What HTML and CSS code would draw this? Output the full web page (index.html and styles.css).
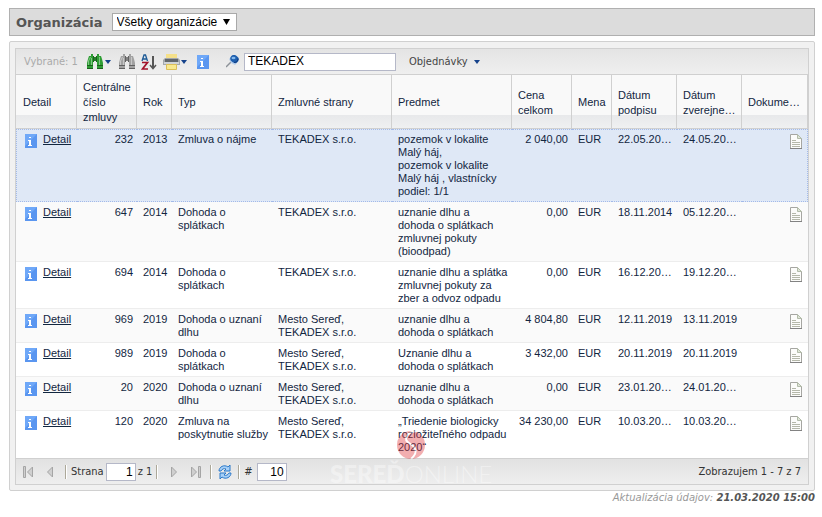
FILE: index.html
```
<!DOCTYPE html>
<html lang="sk">
<head>
    <meta charset="UTF-8">
    <meta name="viewport" content="width=device-width, initial-scale=1.0">
    <title>Organizácia</title>
    <link rel="stylesheet" href="styles.css">
</head>
<body>
    <svg class="defs" aria-hidden="true">
        <symbol id="binoculars" viewBox="0 0 18 16">
            <path d="M3 2h2V0h2v2h1v1h2V2h1V0h2v2h2l1 3 1 4v6h-6V8h-1V7H8v1H7v7H1V9l1-4z" fill="currentColor"/>
            <path d="M7.500 2v6M10.500 2v6M9 3v4M1 11.500h6M11 11.500h6M1 14.500h6M11 14.500h6" fill="none" stroke="#000" stroke-opacity=".4"/>
            <path d="M4.500 3L2.500 7v4M13.500 3v8M5.500 4v7" fill="none" stroke="#fff" stroke-opacity=".4"/>
        </symbol>
        <symbol id="info" viewBox="0 0 12 14">
            <path d="M0 0h12v14H0z" fill="#5a96f0"/>
            <path d="M0 0h12L0 12z" fill="#6fa8f8"/>
            <path d="M4 3h2v1H4zM3 6h3v5h1v1H3v-1h1V7H3z" fill="#fff"/>
        </symbol>
        <symbol id="doc" viewBox="0 0 14 17">
            <path d="M1.500 1.500h7l4 4v10h-11z" fill="#fcfcfa" stroke="#a6a6a2"/>
            <path d="M1 15.500h12" fill="none" stroke="#828282"/>
            <path d="M8.500 1.500v4h4z" fill="#dfe5d8" stroke="#b3bca9"/>
            <path d="M3 7.500h4M3 9.500h8M3 11.500h8M3 13.500h8" stroke="#b5b8aa"/>
        </symbol>
        <symbol id="caret" viewBox="0 0 6 4">
            <path d="M0 0h6L3 4z" fill="#15428b"/>
        </symbol>
    </svg>

    <header class="title-bar">
        <label for="organization">Organizácia</label>
        <select id="organization">
            <option>Všetky organizácie</option>
        </select>
    </header>

    <main class="panel">
        <div class="grid">
            <div class="toolbar">
                <span class="selected-count">Vybrané: 1</span>
                <button type="button" class="tool find" aria-label="Hľadať">
                    <svg width="18" height="16"><use href="#binoculars"/></svg>
                    <svg width="6" height="4"><use href="#caret"/></svg>
                </button>
                <button type="button" class="tool find-off" aria-label="Zrušiť hľadanie">
                    <svg width="18" height="16"><use href="#binoculars"/></svg>
                </button>
                <button type="button" class="tool sort" aria-label="Zoradiť">
                    <svg width="16" height="16" viewBox="0 0 16 16" fill="none">
                        <path d="M1 7l2-6h1.500l2 6M2 5h4" stroke="#1d5a96" stroke-width="1.300"/>
                        <path d="M1 8.500h5.500L1.500 15H7" stroke="#a3122b" stroke-width="1.700"/>
                        <path d="M12 2v12" stroke="#555" stroke-width="2"/>
                        <path d="M9 11l3 3.500 3-3.500" stroke="#555" stroke-width="1.500"/>
                    </svg>
                </button>
                <button type="button" class="tool print" aria-label="Tlačiť">
                    <svg width="17" height="16" viewBox="0 0 17 16">
                        <path d="M3 0h11v4H3z" fill="#f5e08a"/>
                        <path d="M2 4h13l2 2v5H0V6z" fill="#a4a8ac"/>
                        <path d="M2 5h13v3H2z" fill="#62676c"/>
                        <path d="M1 8h15v2H1z" fill="#d0d4d7"/>
                        <path d="M3.500 10.500h10v5h-10z" fill="#f8e98f" stroke="#dcbf58"/>
                    </svg>
                    <svg width="6" height="4"><use href="#caret"/></svg>
                </button>
                <button type="button" class="tool about" aria-label="Informácie">
                    <svg width="12" height="14"><use href="#info"/></svg>
                </button>
                <button type="button" class="tool pin" aria-label="Rýchle hľadanie">
                    <svg width="13" height="13" viewBox="0 0 13 13">
                        <path d="M0 12l5-5" stroke="#8c9198" stroke-width="1.500"/>
                        <path d="M3 4l2 4 4 2 2-2-6-6z" fill="#b5cdea"/>
                        <ellipse cx="8.500" cy="4" rx="4.300" ry="3.700" transform="rotate(35 8.500 4)" fill="#1f5fae"/>
                        <ellipse cx="7.500" cy="3" rx="2" ry="1.300" fill="#83b8ec"/>
                        <path d="M8 7.500c3 0 4-2 4-4" stroke="#123c80" fill="none"/>
                    </svg>
                </button>
                <input type="text" class="search" value="TEKADEX" aria-label="Hľadaný výraz">
                <button type="button" class="tool menu">
                    Objednávky
                    <svg width="6" height="4"><use href="#caret"/></svg>
                </button>
            </div>

            <table>
                <colgroup>
                    <col class="w-detail">
                    <col class="w-60">
                    <col class="w-35">
                    <col class="w-100">
                    <col class="w-120">
                    <col class="w-120">
                    <col class="w-60">
                    <col class="w-40">
                    <col class="w-65">
                    <col class="w-65">
                    <col>
                </colgroup>
                <thead>
                    <tr>
                        <th>Detail</th>
                        <th>Centrálne číslo zmluvy</th>
                        <th>Rok</th>
                        <th>Typ</th>
                        <th>Zmluvné strany</th>
                        <th>Predmet</th>
                        <th>Cena celkom</th>
                        <th>Mena</th>
                        <th>Dátum podpisu</th>
                        <th>Dátum zverejne…</th>
                        <th>Dokume…</th>
                    </tr>
                </thead>
                <tbody>
                    <tr class="selected">
                        <td><div class="detail"><svg width="12" height="14"><use href="#info"/></svg><a href="#">Detail</a></div></td>
                        <td class="num">232</td>
                        <td>2013</td>
                        <td>Zmluva o nájme</td>
                        <td>TEKADEX s.r.o.</td>
                        <td>pozemok v lokalite Malý háj,<br>pozemok v lokalite Malý háj , vlastnícky podiel: 1/1</td>
                        <td class="num">2 040,00</td>
                        <td>EUR</td>
                        <td class="date">22.05.20…</td>
                        <td class="date">24.05.20…</td>
                        <td class="file"><svg width="14" height="17"><use href="#doc"/></svg></td>
                    </tr>
                    <tr>
                        <td><div class="detail"><svg width="12" height="14"><use href="#info"/></svg><a href="#">Detail</a></div></td>
                        <td class="num">647</td>
                        <td>2014</td>
                        <td>Dohoda o splátkach</td>
                        <td>TEKADEX s.r.o.</td>
                        <td>uznanie dlhu a dohoda o splátkach zmluvnej pokuty (bioodpad)</td>
                        <td class="num">0,00</td>
                        <td>EUR</td>
                        <td class="date">18.11.2014</td>
                        <td class="date">05.12.20…</td>
                        <td class="file"><svg width="14" height="17"><use href="#doc"/></svg></td>
                    </tr>
                    <tr>
                        <td><div class="detail"><svg width="12" height="14"><use href="#info"/></svg><a href="#">Detail</a></div></td>
                        <td class="num">694</td>
                        <td>2014</td>
                        <td>Dohoda o splátkach</td>
                        <td>TEKADEX s.r.o.</td>
                        <td>uznanie dlhu a splátka zmluvnej pokuty za zber a odvoz odpadu</td>
                        <td class="num">0,00</td>
                        <td>EUR</td>
                        <td class="date">16.12.20…</td>
                        <td class="date">19.12.20…</td>
                        <td class="file"><svg width="14" height="17"><use href="#doc"/></svg></td>
                    </tr>
                    <tr>
                        <td><div class="detail"><svg width="12" height="14"><use href="#info"/></svg><a href="#">Detail</a></div></td>
                        <td class="num">969</td>
                        <td>2019</td>
                        <td>Dohoda o uznaní dlhu</td>
                        <td>Mesto Sereď, TEKADEX s.r.o.</td>
                        <td>uznanie dlhu a dohoda o splátkach</td>
                        <td class="num">4 804,80</td>
                        <td>EUR</td>
                        <td class="date">12.11.2019</td>
                        <td class="date">13.11.2019</td>
                        <td class="file"><svg width="14" height="17"><use href="#doc"/></svg></td>
                    </tr>
                    <tr>
                        <td><div class="detail"><svg width="12" height="14"><use href="#info"/></svg><a href="#">Detail</a></div></td>
                        <td class="num">989</td>
                        <td>2019</td>
                        <td>Dohoda o splátkach</td>
                        <td>Mesto Sereď, TEKADEX s.r.o.</td>
                        <td>Uznanie dlhu a dohoda o splátkach</td>
                        <td class="num">3 432,00</td>
                        <td>EUR</td>
                        <td class="date">20.11.2019</td>
                        <td class="date">20.11.2019</td>
                        <td class="file"><svg width="14" height="17"><use href="#doc"/></svg></td>
                    </tr>
                    <tr>
                        <td><div class="detail"><svg width="12" height="14"><use href="#info"/></svg><a href="#">Detail</a></div></td>
                        <td class="num">20</td>
                        <td>2020</td>
                        <td>Dohoda o uznaní dlhu</td>
                        <td>Mesto Sereď, TEKADEX s.r.o.</td>
                        <td>uznanie dlhu a dohoda o splátkach</td>
                        <td class="num">0,00</td>
                        <td>EUR</td>
                        <td class="date">23.01.20…</td>
                        <td class="date">24.01.20…</td>
                        <td class="file"><svg width="14" height="17"><use href="#doc"/></svg></td>
                    </tr>
                    <tr>
                        <td><div class="detail"><svg width="12" height="14"><use href="#info"/></svg><a href="#">Detail</a></div></td>
                        <td class="num">120</td>
                        <td>2020</td>
                        <td>Zmluva na poskytnutie služby</td>
                        <td>Mesto Sereď, TEKADEX s.r.o.</td>
                        <td>„Triedenie biologicky rozložiteľného odpadu 2020“</td>
                        <td class="num">34 230,00</td>
                        <td>EUR</td>
                        <td class="date">10.03.20…</td>
                        <td class="date">10.03.20…</td>
                        <td class="file"><svg width="14" height="17"><use href="#doc"/></svg></td>
                    </tr>
                </tbody>
            </table>

            <div class="paging">
                <button type="button" class="page-btn" aria-label="Prvá strana">
                    <svg width="11" height="12" viewBox="0 0 11 12" fill="#cfcfcf" stroke="#a5a5a5"><path d="M.500.500h2v11h-2zM9.500 1v10L4.500 6z"/></svg>
                </button>
                <button type="button" class="page-btn" aria-label="Predošlá strana">
                    <svg width="11" height="12" viewBox="0 0 11 12" fill="#cfcfcf" stroke="#a5a5a5"><path d="M7.500 1v10L2.500 6z"/></svg>
                </button>
                <span class="separator"></span>
                <label for="page">Strana</label>
                <input type="text" id="page" value="1">
                <span>z 1</span>
                <span class="separator"></span>
                <button type="button" class="page-btn" aria-label="Ďalšia strana">
                    <svg width="11" height="12" viewBox="0 0 11 12" fill="#cfcfcf" stroke="#a5a5a5"><path d="M3.500 1v10L8.500 6z"/></svg>
                </button>
                <button type="button" class="page-btn" aria-label="Posledná strana">
                    <svg width="11" height="12" viewBox="0 0 11 12" fill="#cfcfcf" stroke="#a5a5a5"><path d="M8.500.500h2v11h-2zM1.500 1v10L6.500 6z"/></svg>
                </button>
                <span class="separator"></span>
                <button type="button" class="refresh" aria-label="Obnoviť">
                    <svg width="14" height="14" viewBox="0 0 14 14">
                        <path d="M1 6c0-4 5-7 9-4l2-2v6H6l2-2C6 3 4 4 3 6z" fill="#a6d0f8" stroke="#2b78c8"/>
                        <path d="M13 8c0 4-5 7-9 4l-2 2V8h6l-2 2c2 1 4 0 5-2z" fill="#a6d0f8" stroke="#2b78c8"/>
                    </svg>
                </button>
                <span class="separator"></span>
                <label for="size" class="size-label">#</label>
                <input type="text" id="size" value="10">
                <span class="summary">Zobrazujem 1 - 7 z 7</span>
            </div>

            <div class="watermark" aria-hidden="true">
                <svg width="30" height="30" viewBox="0 0 30 30">
                    <circle cx="15" cy="15" r="14" fill="#e0363c"/>
                    <path d="M20 1C9 3 8 10 13 13s11 8 2 16" fill="none" stroke="#fff" stroke-width="2"/>
                </svg>
                <span class="brand"><b>SEREĎ</b>ONLINE</span>
            </div>
        </div>
    </main>

    <footer class="updated">Aktualizácia údajov: <strong>21.03.2020 15:00</strong></footer>
</body>
</html>
```

FILE: styles.css
```
* {
    box-sizing: border-box;
}
body {
    margin: 0;
    padding: 8px 7px 8px 9px;
    background-color: #fff;
    color: #12263f;
    font-family: "Liberation Sans", Arial, sans-serif;
    font-size: 11px;
}
svg {
    display: block;
    flex: none;
}
button {
    padding: 0;
    border: none;
    background: none;
    font: inherit;
    color: inherit;
    cursor: pointer;
}
.defs {
    position: absolute;
    width: 0;
    height: 0;
}

/* title bar */
.title-bar {
    display: flex;
    align-items: center;
    gap: 9px;
    height: 28px;
    padding: 0 6px;
    border: 1px solid #b0b0b0;
    background-color: #dcdcdc;
}
.title-bar label {
    color: #555;
    font-family: "DejaVu Sans", Verdana, sans-serif;
    font-size: 13px;
    font-weight: bold;
}
.title-bar select {
    appearance: none;
    height: 18px;
    padding: 0 18px 0 4px;
    border: 1px solid #a9a9a9;
    border-radius: 0;
    background: #fff url("data:image/svg+xml,%3Csvg xmlns='http://www.w3.org/2000/svg' width='7' height='6'%3E%3Cpath d='M0 0h7L3.500 6z'/%3E%3C/svg%3E") no-repeat right 6px center;
    color: #000;
    font-family: "Liberation Sans", Arial, sans-serif;
    font-size: 12px;
}

/* panel */
.panel {
    margin-top: 5px;
    padding: 6px 5px 5px;
    border: 1px solid #d0d0d0;
    border-radius: 2px;
    background-color: #f1f1f1;
}
.grid {
    position: relative;
    border: 1px solid #d0d0d0;
    background-color: #fff;
}

/* toolbar */
.toolbar {
    display: flex;
    align-items: center;
    height: 26px;
    padding-left: 8px;
    border-bottom: 1px solid #d0d0d0;
    background: linear-gradient(#e4e4e4, #efefef);
    color: #444;
    font-family: "DejaVu Sans Condensed", Tahoma, sans-serif;
}
.selected-count {
    width: 62px;
    color: #aaa;
    white-space: nowrap;
}
.tool {
    display: flex;
    align-items: center;
    gap: 1px;
}
.find {
    width: 32px;
    color: #2f9e35;
}
.find-off {
    width: 23px;
    color: #a2a2a2;
}
.sort {
    width: 22px;
}
.print {
    width: 34px;
}
.about {
    width: 29px;
}
.pin {
    width: 18px;
}
.search {
    width: 152px;
    height: 18px;
    margin-right: 13px;
    padding: 0 3px 2px;
    border: 1px solid #b5b8c8;
    background-color: #fff;
    color: #000;
    font-family: "Liberation Sans", Arial, sans-serif;
    font-size: 12px;
}
.menu {
    gap: 6px;
}

/* table */
table {
    width: 100%;
    table-layout: fixed;
    border-collapse: separate;
    border-spacing: 0;
}
.w-detail {
    width: 61px;
}
.w-35 {
    width: 35px;
}
.w-40 {
    width: 40px;
}
.w-60 {
    width: 60px;
}
.w-65 {
    width: 65px;
}
.w-100 {
    width: 100px;
}
.w-120 {
    width: 120px;
}
th {
    height: 54px;
    padding: 2px 2px 0 6px;
    border-right: 1px solid #d0d0d0;
    border-bottom: 1px solid #d0d0d0;
    background: linear-gradient(#f9f9f9 40px, #e8e9eb 40px, #eff0f1);
    font-weight: normal;
    line-height: 15px;
    text-align: left;
}
td {
    padding: 3px 4px 3px 6px;
    border-top: 1px solid #fff;
    border-bottom: 1px solid #ededed;
    line-height: 13px;
    vertical-align: top;
}
th:first-child {
    padding-left: 7px;
}
tbody tr:nth-child(even) td {
    border-top-color: #fafafa;
    background-color: #fafafa;
}
tbody tr:last-child td {
    border-bottom-color: #fff;
}
tbody .selected td {
    border-top: 1px dotted #a3bae9;
    border-bottom: 1px dotted #a3bae9;
    background-color: #dfe8f6;
}
tbody .selected td:first-child {
    border-left: 1px dotted #a3bae9;
    padding-left: 8px;
}
tbody .selected td:last-child {
    border-right: 1px dotted #a3bae9;
}
td:first-child {
    padding-left: 9px;
}
.detail {
    display: flex;
    gap: 6px;
    height: 13px;
}
.detail svg {
    margin-top: 1px;
}
.detail a {
    color: #12263f;
}
.num {
    text-align: right;
}
.date {
    padding-right: 2px;
    white-space: nowrap;
}
.file {
    padding: 0 5px 0 0;
}
.selected .file {
    padding-right: 4px;
}
.file svg {
    margin: 3px 0 0 auto;
}

/* paging bar */
.paging {
    display: flex;
    align-items: center;
    height: 26px;
    padding: 0 7px 0 1px;
    border-top: 1px solid #d0d0d0;
    background: linear-gradient(#e2e2e2, #eee);
    color: #333;
    font-family: "DejaVu Sans Condensed", Tahoma, sans-serif;
}
.page-btn {
    width: 22px;
}
.page-btn svg,
.refresh svg {
    margin: 0 auto;
}
.separator {
    width: 2px;
    height: 14px;
    margin: 0 4px;
    border-left: 1px solid #aca899;
    border-right: 1px solid #fff;
}
.paging input {
    width: 30px;
    height: 18px;
    margin: 0 2px;
    padding: 0 2px;
    border: 1px solid #b5b8c8;
    background-color: #fff;
    color: #000;
    font-family: "Liberation Sans", Arial, sans-serif;
    font-size: 12px;
    text-align: right;
}
.refresh {
    width: 18px;
}
.size-label {
    margin-right: 2px;
}
.summary {
    margin-left: auto;
}

/* watermark */
.watermark {
    position: absolute;
    bottom: -4px;
    left: 314px;
    display: flex;
    flex-direction: column;
    align-items: center;
    pointer-events: none;
}
.watermark svg {
    opacity: 0.4;
}
.brand {
    color: rgba(255, 255, 255, 0.4);
    font-family: Lato, sans-serif;
    font-size: 24px;
    font-weight: 300;
    line-height: 28px;
}
.brand b {
    font-weight: 900;
}

/* footer */
.updated {
    color: #999;
    font-family: "DejaVu Sans", Verdana, sans-serif;
    font-size: 10px;
    font-style: italic;
    line-height: 14px;
    text-align: right;
}
.updated strong {
    color: #555;
}
```
